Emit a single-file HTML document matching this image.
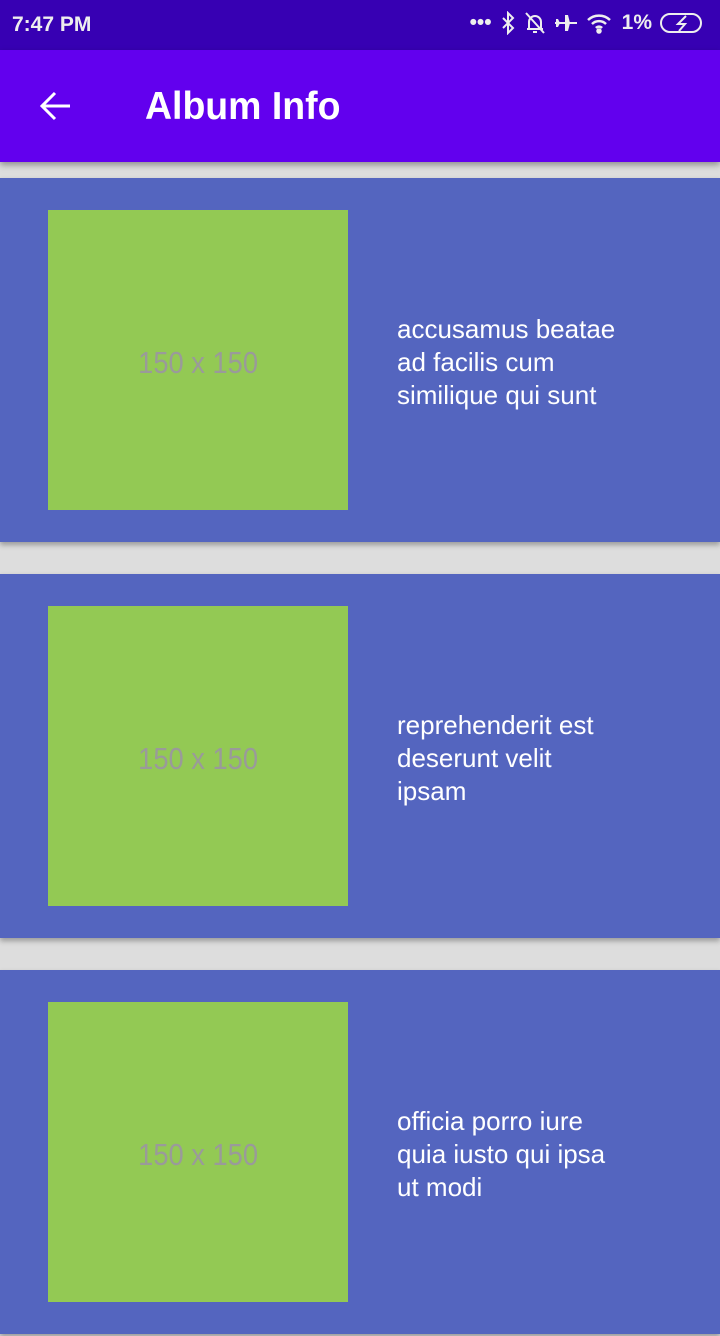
<!DOCTYPE html>
<html><head><style>
body{margin:0;width:720px;height:1280px;overflow:hidden;background:#dddddd;font-family:"Liberation Sans",sans-serif;position:relative}
.sb{position:absolute;top:0;left:0;width:720px;height:50px;background:#3700b3;color:#eee}
.ab{position:absolute;top:50px;left:0;width:720px;height:112px;background:#6200ee;box-shadow:0 3px 6px rgba(0,0,0,.35);z-index:2}
.card{position:absolute;left:0;width:720px;height:364px;background:#5465bf;box-shadow:0 3px 5px rgba(0,0,0,.3)}
.img{position:absolute;left:48px;top:32px;width:300px;height:300px;background:#93c954;color:#9a9a9a;font-size:31px;display:flex;align-items:center;justify-content:center;padding-top:6px;box-sizing:border-box}
.img span{display:inline-block;transform:scaleX(.88)}
.txt{position:absolute;left:397px;top:2px;height:364px;width:300px;display:flex;align-items:center;color:#fff;font-size:26px;line-height:33px;white-space:nowrap}
</style></head><body>
<div class="sb">
<div style="position:absolute;left:12px;top:13px;font-size:21px;font-weight:bold">7:47 PM</div>
<div style="position:absolute;right:14px;top:11px;font-size:21px;font-weight:bold;display:flex;align-items:center;gap:8px">
<span>•••</span>
<svg width="16" height="24" viewBox="0 0 16 24" fill="none" stroke="#eee" stroke-width="2"><path d="M3 7l10 10-5 5V2l5 5L3 17"/></svg>
<svg width="22" height="24" viewBox="0 0 22 24" fill="none" stroke="#eee" stroke-width="2"><path d="M5 18V11a6 6 0 0112 0v7H3h16M9 21h4M2 2l18 20"/></svg>
<svg width="24" height="24" viewBox="0 0 24 24" fill="#eee"><path d="M1 11h22v2H1zM11 4h3l2 8-2 8h-3zM2 8h2l2 4-2 4H2z"/></svg>
<svg width="28" height="24" viewBox="0 0 28 24" fill="none" stroke="#eee" stroke-width="2.5"><path d="M2 9a16 16 0 0122 0M6 13a10 10 0 0114 0M10 17a4 4 0 016 0"/><circle cx="13" cy="20" r="1.5" fill="#eee"/></svg>
<span>1%</span>
<svg width="46" height="24" viewBox="0 0 46 24" fill="none" stroke="#eee" stroke-width="2"><rect x="1" y="3" width="40" height="18" rx="9"/><path d="M26 5l-8 8h7l-6 7" /></svg>
</div></div>
<div class="ab">
<svg style="position:absolute;left:38px;top:40px" width="34" height="32" viewBox="0 0 34 32" fill="none" stroke="#fff" stroke-width="3"><path d="M32 16H4M17 3L4 16l13 13"/></svg>
<div style="position:absolute;left:145px;top:35px;font-size:39px;color:#fff;font-weight:bold;transform:scaleX(.96);transform-origin:left">Album Info</div>
</div>
<div class="card" style="top:178px"><div class="img"><span>150 x 150</span></div><div class="txt">accusamus beatae<br>ad facilis cum<br>similique qui sunt</div></div>
<div class="card" style="top:574px"><div class="img"><span>150 x 150</span></div><div class="txt">reprehenderit est<br>deserunt velit<br>ipsam</div></div>
<div class="card" style="top:970px"><div class="img"><span>150 x 150</span></div><div class="txt">officia porro iure<br>quia iusto qui ipsa<br>ut modi</div></div>
</body></html>
